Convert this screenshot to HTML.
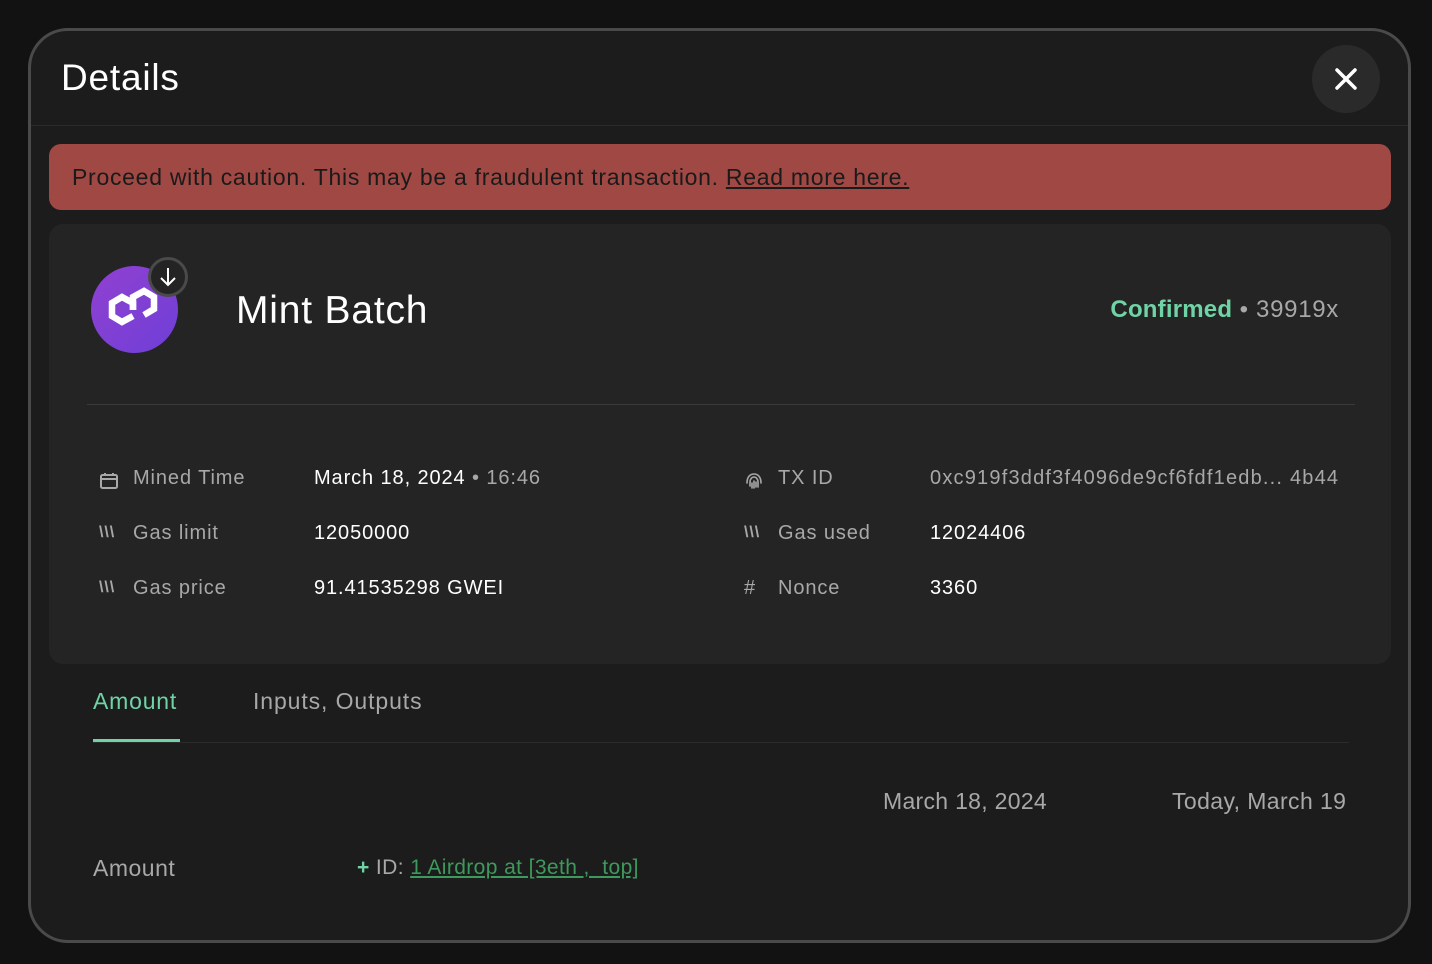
<!DOCTYPE html>
<html><head><meta charset="utf-8"><style>
*{box-sizing:border-box;margin:0;padding:0}
body{width:1432px;height:964px;background:#121212;font-family:"Liberation Sans",sans-serif;position:relative;overflow:hidden;color:#fff}
.modal{position:absolute;left:28px;top:28px;width:1383px;height:915px;border:3px solid #4a4a4a;border-radius:40px;background:#1c1c1c;overflow:hidden}
.abs{position:absolute}
.t{white-space:nowrap}
.lbl{color:#a8a8a8;font-size:20px;letter-spacing:0.9px}
.val{color:#fff;font-size:20px;letter-spacing:0.9px}
</style></head><body>
<div class="modal">
 <div class="abs t" style="left:30px;top:26px;font-size:37px;color:#fff;letter-spacing:0.8px">Details</div>
 <div class="abs" style="left:1281px;top:14px;width:68px;height:68px;border-radius:50%;background:#2a2a2a">
  <svg width="68" height="68" viewBox="0 0 68 68"><path d="M25 25L43 43M43 25L25 43" stroke="#fff" stroke-width="3.5" stroke-linecap="round"/></svg>
 </div>
 <div class="abs" style="left:0;top:94px;width:100%;height:1px;background:#2a2a2a"></div>
 <div class="abs" style="left:18px;top:113px;width:1342px;height:66px;border-radius:12px;background:#a04844"></div>
 <div class="abs t" style="left:41px;top:133px;font-size:23px;color:#1a1a1a;letter-spacing:0.72px">Proceed with caution. This may be a fraudulent transaction. <span style="text-decoration:underline">Read more here.</span></div>
 <div class="abs" style="left:18px;top:193px;width:1342px;height:440px;border-radius:14px;background:#242424"></div>
 <div class="abs" style="left:60px;top:235px;width:87px;height:87px;border-radius:50%;background:linear-gradient(135deg,#9140d0,#6f3fd8)">
  <svg width="87" height="87" viewBox="0 0 87 87"><g fill="none" stroke="#fff" stroke-width="6.5" stroke-linejoin="miter"><path d="M42 44L42 37 31 31 21 37 21 50 31 56 42 50"/><path d="M42 44L42 31 53 25 63 31 63 43 53 49"/></g></svg>
 </div>
 <div class="abs" style="left:117px;top:226px;width:40px;height:40px;border-radius:50%;background:#242424;border:3px solid #4a4a4a">
  <svg width="34" height="34" viewBox="0 0 34 34"><path d="M17 8V25M10 18L17 25 24 18" fill="none" stroke="#fff" stroke-width="2"/></svg>
 </div>
 <div class="abs t" style="left:205px;top:258px;font-size:39px;color:#fff;letter-spacing:0.8px">Mint Batch</div>
 <div class="abs t" style="right:69px;top:265px;font-size:24px;color:#a8a8a8;letter-spacing:0.7px"><span style="color:#6fd3a6;font-weight:bold;letter-spacing:0.2px">Confirmed</span> • 39919x</div>
 <div class="abs" style="left:56px;top:373px;width:1268px;height:1px;background:#3a3a3a"></div>

 <svg class="abs" style="left:68px;top:440px" width="20" height="20" viewBox="0 0 20 20"><rect x="2" y="4" width="16" height="13" rx="1.5" fill="none" stroke="#a8a8a8" stroke-width="2"/><path d="M2 8H18M6 2V5M14 2V5" stroke="#a8a8a8" stroke-width="2"/></svg>
 <div class="abs t lbl" style="left:102px;top:436px">Mined Time</div>
 <div class="abs t val" style="left:283px;top:436px">March 18, 2024 <span style="color:#a8a8a8">• 16:46</span></div>
 <div class="abs t lbl" style="left:68px;top:493px;font-size:16px;font-weight:bold">\\\</div>
 <div class="abs t lbl" style="left:102px;top:491px">Gas limit</div>
 <div class="abs t val" style="left:283px;top:491px">12050000</div>
 <div class="abs t lbl" style="left:68px;top:548px;font-size:16px;font-weight:bold">\\\</div>
 <div class="abs t lbl" style="left:102px;top:546px">Gas price</div>
 <div class="abs t val" style="left:283px;top:546px">91.41535298 GWEI</div>

 <svg class="abs" style="left:713px;top:440px" width="20" height="20" viewBox="0 0 20 20"><g fill="none" stroke="#a8a8a8" stroke-width="1.6" stroke-linecap="round"><path d="M3 12C3 6 6 3 10 3S17 6 17 12"/><path d="M6 15V11C6 8 8 6 10 6S14 8 14 11V16"/><path d="M10 10V17M8 12V17M12 11V16"/></g></svg>
 <div class="abs t lbl" style="left:747px;top:436px">TX ID</div>
 <div class="abs t" style="left:899px;top:436px;font-size:20px;color:#a8a8a8;letter-spacing:1.2px">0xc919f3ddf3f4096de9cf6fdf1edb... 4b44</div>
 <div class="abs t lbl" style="left:713px;top:493px;font-size:16px;font-weight:bold">\\\</div>
 <div class="abs t lbl" style="left:747px;top:491px">Gas used</div>
 <div class="abs t val" style="left:899px;top:491px">12024406</div>
 <div class="abs t lbl" style="left:713px;top:546px">#</div>
 <div class="abs t lbl" style="left:747px;top:546px">Nonce</div>
 <div class="abs t val" style="left:899px;top:546px">3360</div>

 <div class="abs t" style="left:62px;top:657px;font-size:23px;color:#6fd3a6;letter-spacing:0.8px">Amount</div>
 <div class="abs" style="left:62px;top:708px;width:87px;height:3px;background:#6fd3a6"></div>
 <div class="abs t" style="left:222px;top:657px;font-size:23px;color:#a8a8a8;letter-spacing:0.9px">Inputs, Outputs</div>
 <div class="abs" style="left:62px;top:711px;width:1256px;height:1px;background:#2c2c2c"></div>
 <div class="abs t" style="left:852px;top:757px;font-size:23px;color:#a8a8a8;letter-spacing:0.3px">March 18, 2024</div>
 <div class="abs t" style="left:1141px;top:757px;font-size:23px;color:#a8a8a8;letter-spacing:0.4px">Today, March 19</div>
 <div class="abs t" style="left:62px;top:824px;font-size:23px;color:#a8a8a8;letter-spacing:0.5px">Amount</div>
 <div class="abs t" style="left:326px;top:825px;font-size:21px;color:#a8a8a8;letter-spacing:0.4px"><span style="color:#6fd3a6;font-weight:bold">+</span> ID: <span style="color:#3e9a5c;text-decoration:underline">1 Airdrop at [3eth ,&nbsp;&nbsp;top]</span></div>
</div>
</body></html>
